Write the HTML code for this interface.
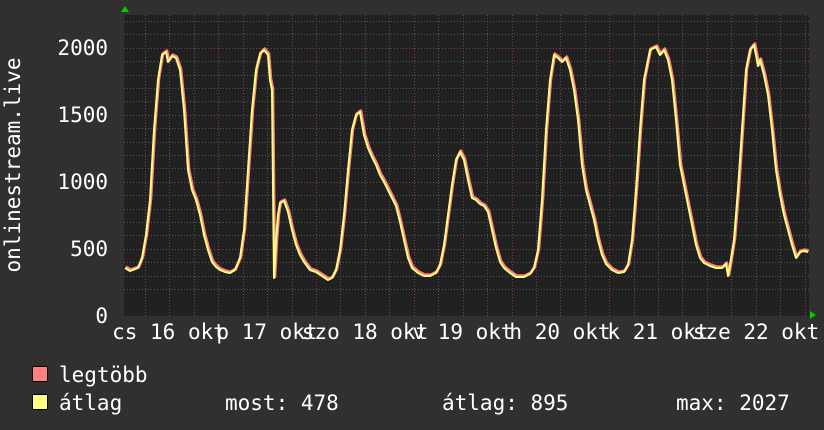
<!DOCTYPE html>
<html><head><meta charset="utf-8"><style>
html,body{margin:0;padding:0;background:#303030;}
svg{display:block}
text{font-family:"DejaVu Sans Mono","Liberation Mono",monospace;fill:#fff;font-size:21px}
</style></head><body>
<svg width="824" height="430" viewBox="0 0 824 430">
<defs>
<path id="ln" d="M125 268L130 271L138 268L142 258L146 235L150 200L154 130L158 80L162 55L166 52L168 62L172 56L176 58L180 70L184 110L188 170L192 190L196 200L200 215L204 235L208 250L212 262L216 267L220 270L225 272L230 273L235 270L240 258L244 230L248 170L252 110L256 70L260 54L264 50L268 55L270 80L272 90L274 278L276 240L278 215L280 203L284 201L288 212L292 230L296 245L300 255L304 262L310 270L316 272L322 276L328 280L332 278L336 270L340 250L344 215L348 170L352 130L356 115L360 112L364 135L368 148L372 157L376 165L380 175L384 182L388 190L392 198L396 206L400 222L404 240L408 258L412 268L418 273L424 276L430 276L436 273L440 265L444 245L448 215L452 185L456 160L460 152L464 160L468 180L472 198L476 200L480 204L484 206L488 212L492 230L496 248L500 262L504 268L510 273L516 277L524 277L530 274L534 268L538 250L542 200L546 130L550 80L554 55L558 58L562 62L566 58L570 70L574 90L578 120L582 165L586 190L590 205L594 220L598 240L602 255L606 264L612 270L618 273L624 272L628 265L632 240L636 190L640 130L644 80L650 50L656 47L660 55L664 50L668 60L672 80L676 120L680 165L684 185L688 205L692 225L696 245L700 258L704 263L710 266L716 268L722 268L726 264L728 276L730 265L734 240L738 190L742 130L746 70L750 50L754 45L756 55L758 66L760 60L764 75L768 95L772 130L776 170L780 195L784 215L788 230L792 245L796 258L800 252L804 251L808 252"/>
</defs>
<rect width="824" height="430" fill="#303030"/>
<rect x="124" y="15" width="685" height="301" fill="#212121"/>
<g stroke="#555" stroke-width="1" stroke-dasharray="1,2" fill="none">
<path d="M124 289.5H809M124 276.5H809M124 262.5H809M124 235.5H809M124 222.5H809M124 209.5H809M124 195.5H809M124 168.5H809M124 155.5H809M124 142.5H809M124 128.5H809M124 101.5H809M124 88.5H809M124 75.5H809M124 61.5H809M124 34.5H809M124 21.5H809"/>
<path d="M145.5 15V316M169.5 15V316M194.5 15V316M243.5 15V316M267.5 15V316M292.5 15V316M340.5 15V316M365.5 15V316M389.5 15V316M438.5 15V316M463.5 15V316M487.5 15V316M536.5 15V316M560.5 15V316M585.5 15V316M634.5 15V316M658.5 15V316M682.5 15V316M731.5 15V316M756.5 15V316M780.5 15V316"/>
</g>
<g stroke="#8a3c3c" stroke-width="1" stroke-dasharray="1,2" fill="none">
<path d="M124 249.5H809M124 182.5H809M124 115.5H809M124 48.5H809"/>
<path d="M218.5 15V318M316.5 15V318M414.5 15V318M512.5 15V318M609.5 15V318M707.5 15V318M805.5 15V318"/>
</g>
<g fill="none" stroke-linejoin="round">
<use href="#ln" transform="translate(0.8,-1.2)" stroke="#ff8080" stroke-width="3"/>
<use href="#ln" stroke="#ffff80" stroke-width="2"/>
</g>
<path d="M121 12L125 6L129 12Z" fill="#00cc00"/>
<path d="M810 311L816 315L810 319Z" fill="#00cc00"/>
<g text-anchor="end">
<text x="108" y="55">2000</text>
<text x="108" y="122">1500</text>
<text x="108" y="189">1000</text>
<text x="108" y="256">500</text>
<text x="108" y="323">0</text>
</g>
<text transform="translate(20,165) rotate(-90)" text-anchor="middle">onlinestream.live</text>
<g text-anchor="middle">
<text x="169" y="339">cs 16 okt</text>
<text x="267" y="339">p 17 okt</text>
<text x="365" y="339">szo 18 okt</text>
<text x="463" y="339">v 19 okt</text>
<text x="560" y="339">h 20 okt</text>
<text x="658" y="339">k 21 okt</text>
<text x="756" y="339">sze 22 okt</text>
</g>
<rect x="32.5" y="366.5" width="15" height="15" fill="#ff8080" stroke="#000"/>
<rect x="32.5" y="394.5" width="15" height="15" fill="#ffff80" stroke="#000"/>
<text x="59" y="382">legtöbb</text>
<text x="59" y="410">átlag</text>
<text x="225" y="410">most: 478</text>
<text x="442" y="410">átlag: 895</text>
<text x="676" y="410">max: 2027</text>
</svg>
</body></html>
